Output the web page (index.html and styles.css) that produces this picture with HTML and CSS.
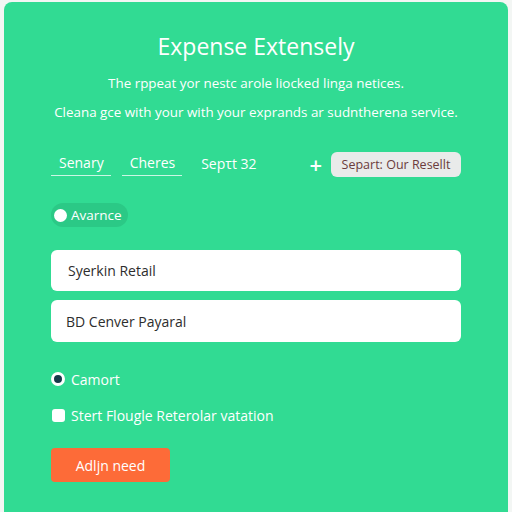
FILE: index.html
```html
<!DOCTYPE html>
<html>
<head>
<meta charset="utf-8">
<link rel="stylesheet" href="styles.css">
</head>
<body>
<div class="card">
  <h1 class="title">Expense Extensely</h1>
  <p class="sub sub1">The rppeat yor nestc arole liocked linga netices.</p>
  <p class="sub sub2">Cleana gce with your with your exprands ar sudntherena service.</p>
  <div class="tabs">
    <span class="tab ul">Senary</span>
    <span class="tab ul">Cheres</span>
    <span class="tab">Sepτt 32</span>
    <span class="spacer"></span>
    <span class="plus">+</span>
    <button class="ghost">Separt: Our Resellt</button>
  </div>
  <div class="pill"><span class="dot"></span>Avarnce</div>
  <div class="field">Syerkin Retail</div>
  <div class="field f2">BD Cenver Payaral</div>
  <div class="opt radio-row"><span class="radio"></span>Camort</div>
  <div class="opt check-row"><span class="check"></span>Stert Flougle Reterolar vatation</div>
  <button class="cta">Adljn need</button>
</div>
</body>
</html>
```
FILE: styles.css
```css
html, body { margin: 0; padding: 0; }
body {
  width: 512px;
  height: 512px;
  background: #f3f6f4;
  font-family: "Open Sans", "Noto Sans", sans-serif;
  overflow: hidden;
}
.card {
  margin: 2px 4px 0 4px;
  height: 520px;
  background: #31db93;
  border-radius: 8px;
  padding: 29px 47px 0 47px;
  box-sizing: border-box;
  color: #fff;
}
.title {
  margin: 0;
  text-align: center;
  font-size: 23px;
  font-weight: 400;
  line-height: 30px;
}
.sub {
  margin: 0;
  text-align: center;
  font-size: 13.4px;
  line-height: 20px;
}
.sub1 { margin-top: 12px; }
.sub2 { margin-top: 9px; }
.tabs {
  display: flex;
  align-items: center;
  margin-top: 29px;
  height: 26px;
  font-size: 14px;
}
.tab {
  padding: 2px 7px 3px 8px;
  margin-right: 11px;
  line-height: 18px;
}
.tab.ul { border-bottom: 1px solid rgba(255,255,255,0.75); }
.spacer { flex: 1; }
.plus {
  font-size: 22px;
  font-weight: 600;
  line-height: 22px;
  margin-right: 9px;
}
.ghost {
  font-family: inherit;
  font-size: 12.5px;
  color: #6b3c3c;
  background: #e9ebea;
  border: none;
  border-radius: 6px;
  height: 25px;
  padding: 0 10px;
  width: 130px;
}
.pill {
  display: flex;
  width: fit-content;
  align-items: center;
  margin-top: 26px;
  height: 24px;
  padding: 0 6px 0 3px;
  border-radius: 12px;
  background: rgba(0,70,40,0.12);
  font-size: 13.5px;
}
.dot {
  width: 13px; height: 13px;
  border-radius: 50%;
  background: #fff;
  margin-right: 4px;
}
.field {
  margin-top: 23px;
  height: 41px;
  background: #fff;
  border-radius: 6px;
  color: #2d2d2d;
  font-size: 14px;
  display: flex;
  align-items: center;
  padding-left: 17px;
}
.field.f2 { margin-top: 9px; height: 42px; padding-left: 15px; }
.opt {
  display: flex;
  align-items: center;
  font-size: 14px;
  height: 20px;
}
.radio-row { margin-top: 27px; }
.check-row { margin-top: 16px; }
.radio {
  width: 8px; height: 8px;
  border: 3px solid #fff;
  background: #163a4a;
  border-radius: 50%;
  margin-right: 6px;
  margin-left: 0;
}
.check {
  width: 13px; height: 13px;
  background: #fff;
  border-radius: 3px;
  margin-right: 6px;
  margin-left: 1px;
}
.cta {
  display: block;
  margin-top: 23px;
  width: 119px;
  height: 34px;
  background: #fd6b38;
  color: #fff;
  border: none;
  border-radius: 4px;
  font-family: inherit;
  font-size: 14px;
}
```
